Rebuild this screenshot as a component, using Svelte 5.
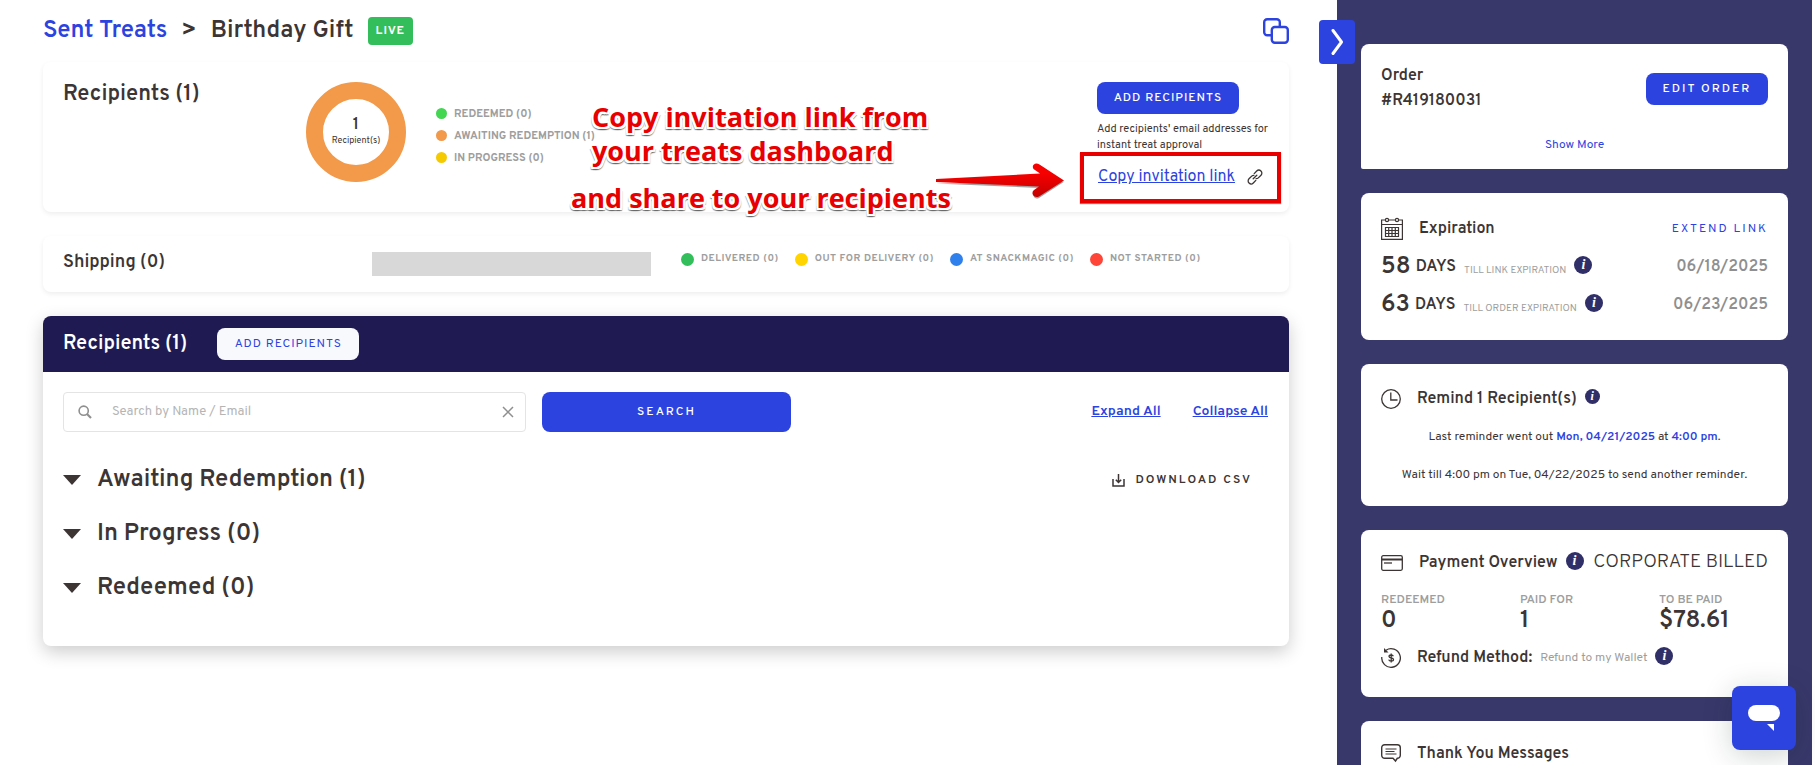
<script lang="ts">
	let search = $state('');

	const recipientLegend = [
		{ label: 'REDEEMED (0)', tone: 'green' },
		{ label: 'AWAITING REDEMPTION (1)', tone: 'orange' },
		{ label: 'IN PROGRESS (0)', tone: 'amber' }
	];

	const shippingLegend = [
		{ label: 'DELIVERED (0)', tone: 'forest' },
		{ label: 'OUT FOR DELIVERY (0)', tone: 'yellow' },
		{ label: 'AT SNACKMAGIC (0)', tone: 'sky' },
		{ label: 'NOT STARTED (0)', tone: 'red' }
	];

	const groups = [
		{ title: 'Awaiting Redemption (1)', csv: true },
		{ title: 'In Progress (0)', csv: false },
		{ title: 'Redeemed (0)', csv: false }
	];

	const deadlines = [
		{ days: 58, note: 'TILL LINK EXPIRATION', date: '06/18/2025' },
		{ days: 63, note: 'TILL ORDER EXPIRATION', date: '06/23/2025' }
	];

	const totals = [
		{ label: 'REDEEMED', value: '0' },
		{ label: 'PAID FOR', value: '1' },
		{ label: 'TO BE PAID', value: '$78.61' }
	];
</script>

{#snippet info(small = false)}
	<button class="info" class:small aria-label="More info">i</button>
{/snippet}

<div class="page">
	<main>
		<header class="top">
			<nav class="crumbs">
				<a href="#sent">Sent Treats</a>
				<span>&gt;</span>
				<h1>Birthday Gift</h1>
				<span class="badge">LIVE</span>
			</nav>
			<button class="plain" aria-label="Duplicate">
				<svg width="26" height="26" viewBox="0 0 26 26" fill="none" stroke="#2d43df" stroke-width="2.4">
					<path d="M8 17.300H4.200a3 3 0 0 1-3-3V4.200a3 3 0 0 1 3-3h9.600a3 3 0 0 1 3 3V8" />
					<rect x="8.800" y="9" width="16" height="15.800" rx="3" />
				</svg>
			</button>
		</header>

		<section class="card recipients">
			<h2>Recipients (1)</h2>
			<div class="donut">
				<svg width="100" height="100" viewBox="0 0 100 100">
					<circle cx="50" cy="50" r="41.5" fill="none" stroke="#f2994a" stroke-width="17" />
				</svg>
				<div class="donut-label">
					<strong>1</strong>
					<span>Recipient(s)</span>
				</div>
			</div>
			<ul class="legend">
				{#each recipientLegend as item}
					<li><i class="dot {item.tone}"></i>{item.label}</li>
				{/each}
			</ul>
			<div class="actions">
				<button class="btn">ADD RECIPIENTS</button>
				<p>Add recipients' email addresses for instant treat approval</p>
				<div class="invite">
					<a href="#invite">Copy invitation link</a>
					<svg width="16" height="16" viewBox="0 0 16 16" fill="none" stroke="#3c3534" stroke-width="1.3" stroke-linecap="round">
						<path d="M6.2 9.8l3.6-3.6M7.2 4.6l2.5-2.6a2.9 2.9 0 0 1 4.3 4.2l-2.7 2.7a2.9 2.9 0 0 1-2.2.8M8.8 11.4l-2.5 2.6A2.9 2.9 0 0 1 2 9.8l2.7-2.7a2.9 2.9 0 0 1 2.2-.8" />
					</svg>
					<div class="frame"></div>
				</div>
			</div>

			<div class="note first">Copy invitation link from<br />your treats dashboard</div>
			<div class="note second">and share to your recipients</div>
			<svg class="arrow" width="132" height="40" viewBox="0 0 132 40">
				<defs>
					<linearGradient id="arrow-fill" x1="0" y1="0" x2="0" y2="1">
						<stop offset="0.3" stop-color="#f60000" />
						<stop offset="1" stop-color="#c40000" />
					</linearGradient>
				</defs>
				<path d="M1 20.500L104 25 98 32q2 5 6 3L129 18.800z" fill="#444" opacity=".5" />
				<path
					d="M1 16L105 10.500 98.500 6Q96.500 2.500 100 .8 102 0 104.500 1.500L129 17.500 104 33.500Q100 35 98 32 96.500 29 99 27L104 23.500 1 19z"
					fill="url(#arrow-fill)"
				/>
			</svg>
		</section>

		<section class="card shipping">
			<h3>Shipping (0)</h3>
			<div class="bar"></div>
			<ul class="legend wide">
				{#each shippingLegend as item}
					<li><i class="dot {item.tone}"></i>{item.label}</li>
				{/each}
			</ul>
		</section>

		<section class="table">
			<header>
				<h2>Recipients (1)</h2>
				<button class="btn light">ADD RECIPIENTS</button>
			</header>
			<form class="search" onsubmit={(e) => e.preventDefault()}>
				<div class="field">
					<svg width="14" height="14" viewBox="0 0 14 14" fill="none" stroke="#8f8f8f" stroke-width="1.6">
						<circle cx="5.700" cy="5.700" r="4.600" />
						<path d="M9 9l4 4" stroke-width="2.200" />
					</svg>
					<input type="text" aria-label="Search by Name / Email" placeholder="Search by Name / Email" bind:value={search} />
					<button type="button" class="plain" aria-label="Clear" onclick={() => (search = '')}>
						<svg width="12" height="12" viewBox="0 0 12 12" stroke="#8f8f8f" stroke-width="1.5">
							<path d="M1 1l10 10M11 1L1 11" />
						</svg>
					</button>
				</div>
				<button class="btn submit">SEARCH</button>
				<div class="toggles">
					<a href="#expand">Expand All</a>
					<a href="#collapse">Collapse All</a>
				</div>
			</form>
			{#each groups as group}
				<div class="group">
					<svg width="18" height="10" viewBox="0 0 18 10"><path d="M0 0h18L9 10z" fill="#3c3534" /></svg>
					<h2>{group.title}</h2>
					{#if group.csv}
						<button class="plain csv">
							<svg width="13" height="13" viewBox="0 0 13 13" fill="none" stroke="#3c3534" stroke-width="1.5">
								<path d="M1 5v7h11V5M6.500 0v8M3.800 5.800l2.700 2.700 2.700-2.700" />
							</svg>
							DOWNLOAD CSV
						</button>
					{/if}
				</div>
			{/each}
		</section>
	</main>

	<aside>
		<button class="collapse" aria-label="Hide panel">
			<svg width="12" height="26" viewBox="0 0 12 26" fill="none" stroke="#fff" stroke-width="3" stroke-linecap="round" stroke-linejoin="round">
				<path d="M2 1.500l8.500 11.500L2 24.500" />
			</svg>
		</button>
		<div class="panels">
			<section class="panel order">
				<div class="row">
					<h4>Order<br />#R419180031</h4>
					<button class="btn edit">EDIT ORDER</button>
				</div>
				<a href="#more">Show More</a>
			</section>

			<section class="panel expiration">
				<div class="row title">
					<svg width="22" height="24" viewBox="0 0 22 24" fill="none" stroke="#3c3534" stroke-width="1.2">
						<path d="M4 3H.600v19.400h20.800V3H18M8 3h6M.600 7.500h20.800" />
						<circle cx="6" cy="3" r="1.600" />
						<circle cx="16" cy="3" r="1.600" />
						<path d="M4.500 10.500h13v9h-13zM4.500 13.500h13M4.500 16.500h13M7.700 10.500v9M11 10.500v9M14.300 10.500v9" />
					</svg>
					<h4>Expiration</h4>
					<a class="end extend" href="#extend">EXTEND LINK</a>
				</div>
				{#each deadlines as d}
					<div class="row deadline">
						<strong>{d.days}</strong>
						<b>DAYS</b>
						<small>{d.note}</small>
						{@render info()}
						<time class="end">{d.date}</time>
					</div>
				{/each}
			</section>

			<section class="panel remind">
				<div class="row title">
					<svg width="20" height="20" viewBox="0 0 20 20" fill="none" stroke="#3c3534" stroke-width="1.300">
						<circle cx="10" cy="10" r="9.300" />
						<path d="M9.800 3.500v7.500h6.700" />
					</svg>
					<h4>Remind 1 Recipient(s)</h4>
					{@render info(true)}
				</div>
				<p>Last reminder went out <b>Mon, 04/21/2025</b> at <b>4:00 pm</b>.</p>
				<p>Wait till 4:00 pm on Tue, 04/22/2025 to send another reminder.</p>
			</section>

			<section class="panel payment">
				<div class="row title">
					<svg width="22" height="16" viewBox="0 0 22 16" fill="none" stroke="#3c3534" stroke-width="1.300">
						<rect x=".700" y=".700" width="20.600" height="14.600" rx="1.500" />
						<path d="M1 4.500h20" stroke-width="2" />
						<path d="M3 8h8" />
					</svg>
					<h4>Payment Overview</h4>
					{@render info()}
					<span class="end billed">CORPORATE BILLED</span>
				</div>
				<dl>
					{#each totals as t}
						<div>
							<dt>{t.label}</dt>
							<dd>{t.value}</dd>
						</div>
					{/each}
				</dl>
				<div class="row title">
					<svg width="20" height="20" viewBox="0 0 20 20" fill="none" stroke="#3c3534" stroke-width="1.300">
						<path d="M5 2.200A9.300 9.300 0 1 1 .800 9" />
						<path d="M3 0v4.500h4.500z" fill="#3c3534" stroke="none" />
						<path d="M12.300 8.200C12 7.300 11.200 7 10.200 7 8.900 7 8 7.600 8 8.500c0 2.200 4.500.800 4.500 3 0 1-1 1.600-2.300 1.600-1.300 0-2.200-.5-2.500-1.500M10.200 5.500v9" />
					</svg>
					<h4>Refund Method:</h4>
					<span class="wallet">Refund to my Wallet</span>
					{@render info()}
				</div>
			</section>

			<section class="panel thanks">
				<div class="row title">
					<svg width="20" height="19" viewBox="0 0 20 19" fill="none" stroke="#3c3534" stroke-width="1.400">
						<path d="M3.700.700h12.600a3 3 0 0 1 3 3v7.600a3 3 0 0 1-3 3L14.500 17l-2.500-2.700H3.700a3 3 0 0 1-3-3V3.700a3 3 0 0 1 3-3z" />
						<path d="M4.500 5h11M4.500 7.500h9M4.500 10h11" stroke-width="1.100" />
					</svg>
					<h4>Thank You Messages</h4>
				</div>
			</section>
		</div>
	</aside>

	<button class="chat" aria-label="Open chat">
		<svg width="32" height="26" viewBox="0 0 32 26" fill="#fff">
			<rect width="32" height="16" rx="8" />
			<path d="M19 19h7v7z" />
		</svg>
	</button>
</div>

<style>
	:global(body) {
		background: #fff;
	}

	.page {
		display: flex;
		height: 100vh;
		padding-right: 3px;
		overflow: hidden;
		position: relative;
		box-sizing: border-box;
		color: #3c3534;
		font-family: Overpass, Roboto, sans-serif;
		font-size: 16px;
	}

	h1,
	h2,
	h3,
	h4,
	p,
	ul,
	dl,
	dd {
		margin: 0;
		padding: 0;
		font-weight: 600;
	}

	svg {
		display: block;
		flex: none;
	}

	a {
		color: #2d43df;
	}

	button {
		font-family: inherit;
		border: 0;
		padding: 0;
		cursor: pointer;
	}

	.plain {
		background: none;
		color: inherit;
	}

	main {
		flex: 1;
		min-width: 0;
		padding: 0 48px 0 43px;
	}

	.top {
		display: flex;
		justify-content: space-between;
		align-items: center;
		height: 62px;
	}

	.crumbs {
		display: flex;
		align-items: center;
		gap: 14px;
		font-size: 24px;
		line-height: 32px;
		font-weight: 600;
	}

	.crumbs a {
		text-decoration: none;
	}

	h1 {
		font-size: 24px;
	}

	.badge {
		background: #34be5b;
		color: #fff;
		border-radius: 4px;
		padding: 0 8px;
		font-size: 12px;
		line-height: 28px;
		font-weight: 700;
		letter-spacing: 1px;
	}

	.card {
		display: flex;
		position: relative;
		border-radius: 8px;
		box-shadow: 0 2px 5px rgba(0, 0, 0, 0.07);
		margin-bottom: 24px;
		padding: 0 20px;
	}

	.recipients {
		padding-top: 20px;
		padding-bottom: 25px;
	}

	.recipients h2 {
		width: 243px;
		font-size: 22px;
		line-height: 26px;
	}

	.donut {
		display: grid;
		height: 100px;
		margin-right: 30px;
	}

	.donut > * {
		grid-area: 1 / 1;
	}

	.donut-label {
		display: flex;
		flex-direction: column;
		align-items: center;
		justify-content: center;
		font-size: 9px;
		line-height: 16px;
		padding-top: 2px;
	}

	.donut-label strong {
		font-size: 16px;
		font-weight: 600;
	}

	.legend {
		display: flex;
		flex-direction: column;
		align-self: center;
		list-style: none;
		color: #9e9e9e;
		font-size: 11px;
		line-height: 22px;
		padding-top: 2px;
	}

	.legend li {
		display: flex;
		align-items: center;
		gap: 7px;
		font-weight: 700;
	}

	.dot {
		width: 11px;
		height: 11px;
		border-radius: 50%;
	}

	.green { background: #42d651; }
	.orange { background: #f2994a; }
	.amber { background: #f5cb00; }
	.forest { background: #34be5b; }
	.yellow { background: #ffd400; }
	.sky { background: #2f80ed; }
	.red { background: #ff4438; }

	.btn {
		display: block;
		height: 32px;
		border-radius: 8px;
		background: #2d43df;
		color: #fff;
		font-size: 12px;
		font-weight: 500;
		letter-spacing: 1px;
		white-space: nowrap;
	}

	.btn.light {
		background: #f8f9fd;
		color: #2d43df;
		font-weight: 400;
	}

	.actions {
		width: 172px;
		margin-left: auto;
	}

	.actions .btn,
	.btn.light {
		width: 142px;
	}

	.actions p {
		margin: 7px 0 14px;
		font-size: 11px;
		line-height: 16px;
		font-weight: 400;
	}

	.invite {
		display: flex;
		align-items: center;
		gap: 12px;
		position: relative;
		padding-left: 1px;
		line-height: 20px;
	}

	.frame {
		position: absolute;
		inset: -15px -12px -16px -17px;
		border: 4px solid #e80000;
		box-shadow: 0 1px 1px rgba(0, 0, 0, 0.5);
		pointer-events: none;
	}

	.note {
		position: absolute;
		color: #e80000;
		font-family: 'Open Sans', 'Noto Sans', sans-serif;
		font-size: 27px;
		line-height: 34px;
		font-weight: 700;
		white-space: nowrap;
		text-shadow:
			-2px 0 #fff, 2px 0 #fff, 0 -2px #fff, 0 2px #fff,
			-2px -2px #fff, 2px -2px #fff, -2px 2px #fff, 2px 2px #fff,
			0 3px 1px #666, -2px 3px 1px #888, 2px 3px 1px #888;
	}

	.first {
		left: 549px;
		top: 38px;
	}

	.second {
		left: 528px;
		top: 119px;
	}

	.arrow {
		position: absolute;
		left: 892px;
		top: 101px;
	}

	.shipping {
		align-items: center;
		height: 56px;
	}

	h3 {
		width: 309px;
		padding-bottom: 4px;
		font-size: 18px;
	}

	.bar {
		width: 279px;
		height: 24px;
		background: #d8d8d8;
	}

	.wide {
		flex-direction: row;
		gap: 16px;
		margin-left: 30px;
		padding: 0 0 10px;
		font-size: 10px;
		letter-spacing: 0.05em;
	}

	.wide .dot {
		width: 13px;
		height: 13px;
	}

	.table {
		border-radius: 8px;
		box-shadow: 0 6px 18px rgba(0, 0, 0, 0.2);
		padding-bottom: 31px;
	}

	.table header {
		display: flex;
		align-items: center;
		gap: 30px;
		height: 56px;
		padding: 0 20px;
		border-radius: 8px 8px 0 0;
		background: #201a52;
		color: #fff;
	}

	.table header h2 {
		font-size: 20px;
		line-height: 32px;
	}

	.search {
		display: flex;
		align-items: center;
		gap: 16px;
		padding: 20px 21px 21px 20px;
	}

	.field {
		display: flex;
		align-items: center;
		width: 463px;
		height: 40px;
		box-sizing: border-box;
		border: 1px solid #e4e4e4;
		border-radius: 4px;
		padding: 0 11px 0 14px;
	}

	.field input {
		flex: 1;
		min-width: 0;
		border: 0;
		outline: 0;
		padding: 0 0 0 20px;
		background: none;
		color: inherit;
		font: 13px Overpass, Roboto, sans-serif;
	}

	.field input::placeholder {
		color: #b5b5b5;
	}

	.submit {
		width: 249px;
		height: 40px;
		letter-spacing: 2px;
	}

	.toggles {
		display: flex;
		gap: 32px;
		margin-left: auto;
		padding-bottom: 2px;
		font-size: 14px;
		font-weight: 600;
	}

	.group {
		display: flex;
		align-items: center;
		gap: 16px;
		padding: 0 37px 0 20px;
		height: 54px;
	}

	.group h2 {
		font-size: 24px;
	}

	.csv {
		display: flex;
		align-items: center;
		gap: 10px;
		margin-left: auto;
		font-size: 12px;
		font-weight: 600;
		letter-spacing: 2px;
	}

	aside {
		position: relative;
		width: 475px;
		flex: none;
		background: #39386b;
	}

	.panels {
		display: flex;
		flex-direction: column;
		gap: 24px;
		padding: 44px 24px 0;
	}

	.collapse {
		position: absolute;
		left: -18px;
		top: 20px;
		display: grid;
		place-items: center;
		width: 36px;
		height: 44px;
		border-radius: 4px;
		background: #2d43df;
	}

	.panel {
		padding: 20px;
		border-radius: 8px;
		background: #fff;
	}

	.row {
		display: flex;
		align-items: center;
	}

	h4 {
		font-size: 16px;
		line-height: 25px;
	}

	.title svg {
		margin-right: 16px;
	}

	.title h4 {
		padding-top: 2px;
		line-height: 23px;
	}

	.end {
		margin-left: auto;
	}

	.info {
		width: 18px;
		height: 18px;
		margin: 0 0 4px 8px;
		border-radius: 50%;
		background: #302f68;
		color: #fff;
		font: italic 700 14px/18px 'Liberation Serif', serif;
	}

	.info.small {
		width: 15px;
		height: 15px;
		font-size: 12px;
		line-height: 15px;
	}

	.order {
		padding-bottom: 16px;
		border-radius: 8px 8px 2px 2px;
		text-align: center;
	}

	.order .row {
		justify-content: space-between;
		margin-bottom: 23px;
		text-align: left;
	}

	.order a {
		display: block;
		font-size: 12px;
		line-height: 16px;
		text-decoration: none;
	}

	.edit {
		width: 122px;
		letter-spacing: 2px;
	}

	.expiration {
		padding-bottom: 16px;
	}

	.expiration .title {
		height: 39px;
		margin-top: -4px;
	}

	.extend {
		font-size: 12px;
		letter-spacing: 2px;
		text-decoration: none;
	}

	.deadline {
		height: 38px;
	}

	.deadline strong {
		font-size: 24px;
		font-weight: 600;
	}

	.deadline b {
		margin: 0 8px 0 5px;
		font-weight: 600;
	}

	.deadline small {
		margin-top: 6px;
		color: #9e9e9e;
		font-size: 10px;
	}

	time {
		color: #8f8f8f;
		font-weight: 600;
	}

	.remind p {
		margin-top: 22px;
		font-size: 12px;
		line-height: 16px;
		font-weight: 400;
		text-align: center;
	}

	.remind .title {
		margin: 2px 0 -4px;
	}

	.remind p b {
		color: #2d43df;
		font-weight: 600;
	}

	.remind {
		padding-bottom: 23px;
	}

	.billed {
		padding-bottom: 2px;
		font-size: 19px;
		line-height: 20px;
		font-weight: 300;
	}

	dl {
		display: grid;
		grid-template-columns: repeat(3, 139px);
		margin: 17px 0 11px;
	}

	dt {
		color: #9e9e9e;
		font-size: 12px;
		line-height: 16px;
		font-weight: 600;
	}

	dd {
		font-size: 24px;
		line-height: 26px;
	}

	.payment {
		padding-bottom: 27px;
	}

	.wallet {
		margin-left: 8px;
		color: #9e9e9e;
		font-size: 12px;
	}

	.chat {
		position: absolute;
		right: 19px;
		bottom: 15px;
		display: grid;
		place-items: center;
		width: 64px;
		height: 64px;
		border-radius: 8px;
		background: #2d43df;
		box-shadow: 0 5px 30px rgba(0, 30, 30, 0.2);
	}
</style>
